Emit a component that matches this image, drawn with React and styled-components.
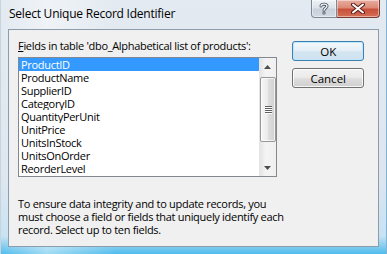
import React from "react";
import styled, { createGlobalStyle } from "styled-components";

const GlobalStyle = createGlobalStyle`
  html, body {
    margin: 0;
    padding: 0;
    background: #5fc0ec;
  }
  * { box-sizing: border-box; }
`;

const FONT = `"Open Sans", "Noto Sans", "Liberation Sans", sans-serif`;

const Frame = styled.div`
  width: 387px;
  height: 254px;
  display: flex;
  flex-direction: column;
  padding: 0 7px 7px 7px;
  background:
    linear-gradient(90deg, rgba(255,255,255,0.0) 0%, rgba(255,255,255,0.45) 12%, rgba(255,255,255,0) 30%),
    linear-gradient(180deg, #e3eaf1 0%, #dde6ef 70%, #c7e2f3 93%, #4fbcec 100%);
  border-left: 1px solid #c9d3dd;
  border-right: 1px solid #7fb4d6;
  font-family: ${FONT};
  color: #000;
`;

const TitleBar = styled.div`
  height: 29px;
  display: flex;
  align-items: flex-start;
  justify-content: space-between;
  flex-shrink: 0;
`;

const Title = styled.div`
  padding-top: 6px;
  padding-left: 1px;
  font-size: 12px;
  line-height: 16px;
  letter-spacing: -0.23px;
`;

const Caption = styled.div`
  display: flex;
  margin-right: -1px;
`;

const CaptionButton = styled.div`
  height: 18px;
  width: ${({ $w }) => $w}px;
  display: flex;
  align-items: center;
  justify-content: center;
  border: 1px solid ${({ $close }) => ($close ? "#7a3a30" : "#7c8896")};
  border-top: none;
  border-radius: ${({ $close }) => ($close ? "0 0 4px 0" : "0 0 0 4px")};
  border-left: ${({ $close }) => ($close ? "none" : undefined)};
  background: ${({ $close }) =>
    $close
      ? "linear-gradient(180deg, #e9ad9e 0%, #dc8a77 45%, #c8503a 55%, #d66e57 100%)"
      : "linear-gradient(180deg, #eef2f6 0%, #dde3ea 45%, #c8d0da 55%, #d3dae3 100%)"};
  box-shadow: inset 0 0 0 1px rgba(255,255,255,0.45);
`;

const Client = styled.div`
  flex: 1;
  background: #f0f0f0;
  border: 1px solid #8d9cab;
  padding: 8px 14px 0 9px;
  display: flex;
  flex-direction: column;
  font-size: 11px;
  letter-spacing: -0.3px;
`;

const Top = styled.div`
  display: flex;
  gap: 15px;
`;

const LeftCol = styled.div`
  width: 261px;
  display: flex;
  flex-direction: column;
`;

const Label = styled.div`
  line-height: 15px;
  margin-bottom: 4px;
  white-space: nowrap;
  u { text-decoration: underline; text-underline-offset: 1px; }
`;

const ListBox = styled.div`
  height: 120px;
  border: 1px solid #828790;
  background: #fff;
  display: flex;
`;

const Items = styled.div`
  flex: 1;
  display: flex;
  flex-direction: column;
  overflow: hidden;
`;

const Item = styled.div`
  height: 13px;
  line-height: 13px;
  padding-left: 2px;
  white-space: nowrap;
  overflow: hidden;
  background: ${({ $selected }) => ($selected ? "#3399ff" : "transparent")};
  color: ${({ $selected }) => ($selected ? "#fff" : "#000")};
`;

const ScrollBar = styled.div`
  width: 17px;
  display: flex;
  flex-direction: column;
  background: linear-gradient(90deg, #e3e3e3 0%, #f4f4f4 40%, #f0f0f0 100%);
`;

const ArrowButton = styled.div`
  height: 17px;
  display: flex;
  align-items: center;
  justify-content: center;
`;

const Track = styled.div`
  flex: 1;
  display: flex;
  flex-direction: column;
  padding-top: 2px;
`;

const Thumb = styled.div`
  height: 65px;
  margin: 0 0 0 1px;
  border: 1px solid #979797;
  border-radius: 2px;
  background: linear-gradient(90deg, #f6f6f6 0%, #ececec 45%, #dcdcdc 55%, #d2d2d2 100%);
  box-shadow: inset 0 0 0 1px rgba(255,255,255,0.7);
  display: flex;
  align-items: center;
  justify-content: center;
`;

const Grip = styled.div`
  width: 7px;
  display: flex;
  flex-direction: column;
  gap: 1px;
  span {
    display: block;
    height: 1px;
    background: #5f5f5f;
    box-shadow: 0 1px 0 #fff;
  }
`;

const RightCol = styled.div`
  width: 72px;
  padding-top: 3px;
  display: flex;
  flex-direction: column;
  gap: 7px;
`;

const Button = styled.div`
  height: 20px;
  border: 1px solid ${({ $default }) => ($default ? "#3c7fb1" : "#707070")};
  border-radius: 3px;
  font-size: 11.5px;
  letter-spacing: 0;
  display: flex;
  align-items: center;
  justify-content: center;
  background: ${({ $default }) =>
    $default
      ? "linear-gradient(180deg, #f3f8fb 0%, #e6f0f7 45%, #d4e5f1 55%, #cfe2ef 100%)"
      : "linear-gradient(180deg, #f2f2f2 0%, #ebebeb 45%, #dddddd 55%, #cfcfcf 100%)"};
  box-shadow: ${({ $default }) =>
    $default ? "inset 0 0 0 1px #bfe6fb" : "inset 0 0 0 1px rgba(255,255,255,0.8)"};
`;

const Note = styled.div`
  margin-top: 20px;
  line-height: 13px;
  white-space: nowrap;
`;

const fields = [
  "ProductID",
  "ProductName",
  "SupplierID",
  "CategoryID",
  "QuantityPerUnit",
  "UnitPrice",
  "UnitsInStock",
  "UnitsOnOrder",
  "ReorderLevel",
];

const HelpIcon = () => (
  <svg width="10" height="13" viewBox="0 0 10 13">
    <path
      d="M2 4 C2 1.5 8 1.5 8 4.2 C8 6 5 6 5 8.3"
      fill="none"
      stroke="#4b5460"
      strokeWidth="3"
      strokeLinecap="round"
    />
    <path
      d="M2 4 C2 1.5 8 1.5 8 4.2 C8 6 5 6 5 8.3"
      fill="none"
      stroke="#f4f6f8"
      strokeWidth="1.3"
      strokeLinecap="round"
    />
    <circle cx="5" cy="11" r="1.6" fill="#4b5460" />
    <circle cx="5" cy="11" r="0.7" fill="#f4f6f8" />
  </svg>
);

const CloseIcon = () => (
  <svg width="14" height="11" viewBox="0 0 14 11">
    <path d="M2 1.5 L12 9.5 M12 1.5 L2 9.5" stroke="#5a1e16" strokeWidth="4" strokeLinecap="round" />
    <path d="M2 1.5 L12 9.5 M12 1.5 L2 9.5" stroke="#ffffff" strokeWidth="2" strokeLinecap="round" />
  </svg>
);

const UpArrow = () => (
  <svg width="7" height="4" viewBox="0 0 7 4">
    <path d="M0 4 L3.5 0 L7 4 Z" fill="#4d4d4d" />
  </svg>
);

const DownArrow = () => (
  <svg width="7" height="4" viewBox="0 0 7 4">
    <path d="M0 0 L3.5 4 L7 0 Z" fill="#4d4d4d" />
  </svg>
);

export default function App() {
  return (
    <>
      <GlobalStyle />
      <Frame>
        <TitleBar>
          <Title>Select Unique Record Identifier</Title>
          <Caption>
            <CaptionButton $w={26}>
              <HelpIcon />
            </CaptionButton>
            <CaptionButton $w={43} $close>
              <CloseIcon />
            </CaptionButton>
          </Caption>
        </TitleBar>
        <Client>
          <Top>
            <LeftCol>
              <Label>
                <u>F</u>ields in table 'dbo_Alphabetical list of products':
              </Label>
              <ListBox>
                <Items>
                  {fields.map((f, i) => (
                    <Item key={f} $selected={i === 0}>
                      {f}
                    </Item>
                  ))}
                </Items>
                <ScrollBar>
                  <ArrowButton>
                    <UpArrow />
                  </ArrowButton>
                  <Track>
                    <Thumb>
                      <Grip>
                        <span />
                        <span />
                        <span />
                        <span />
                      </Grip>
                    </Thumb>
                  </Track>
                  <ArrowButton>
                    <DownArrow />
                  </ArrowButton>
                </ScrollBar>
              </ListBox>
            </LeftCol>
            <RightCol>
              <Button $default>OK</Button>
              <Button>Cancel</Button>
            </RightCol>
          </Top>
          <Note>
            To ensure data integrity and to update records, you
            <br />
            must choose a field or fields that uniquely identify each
            <br />
            record. Select up to ten fields.
          </Note>
        </Client>
      </Frame>
    </>
  );
}
